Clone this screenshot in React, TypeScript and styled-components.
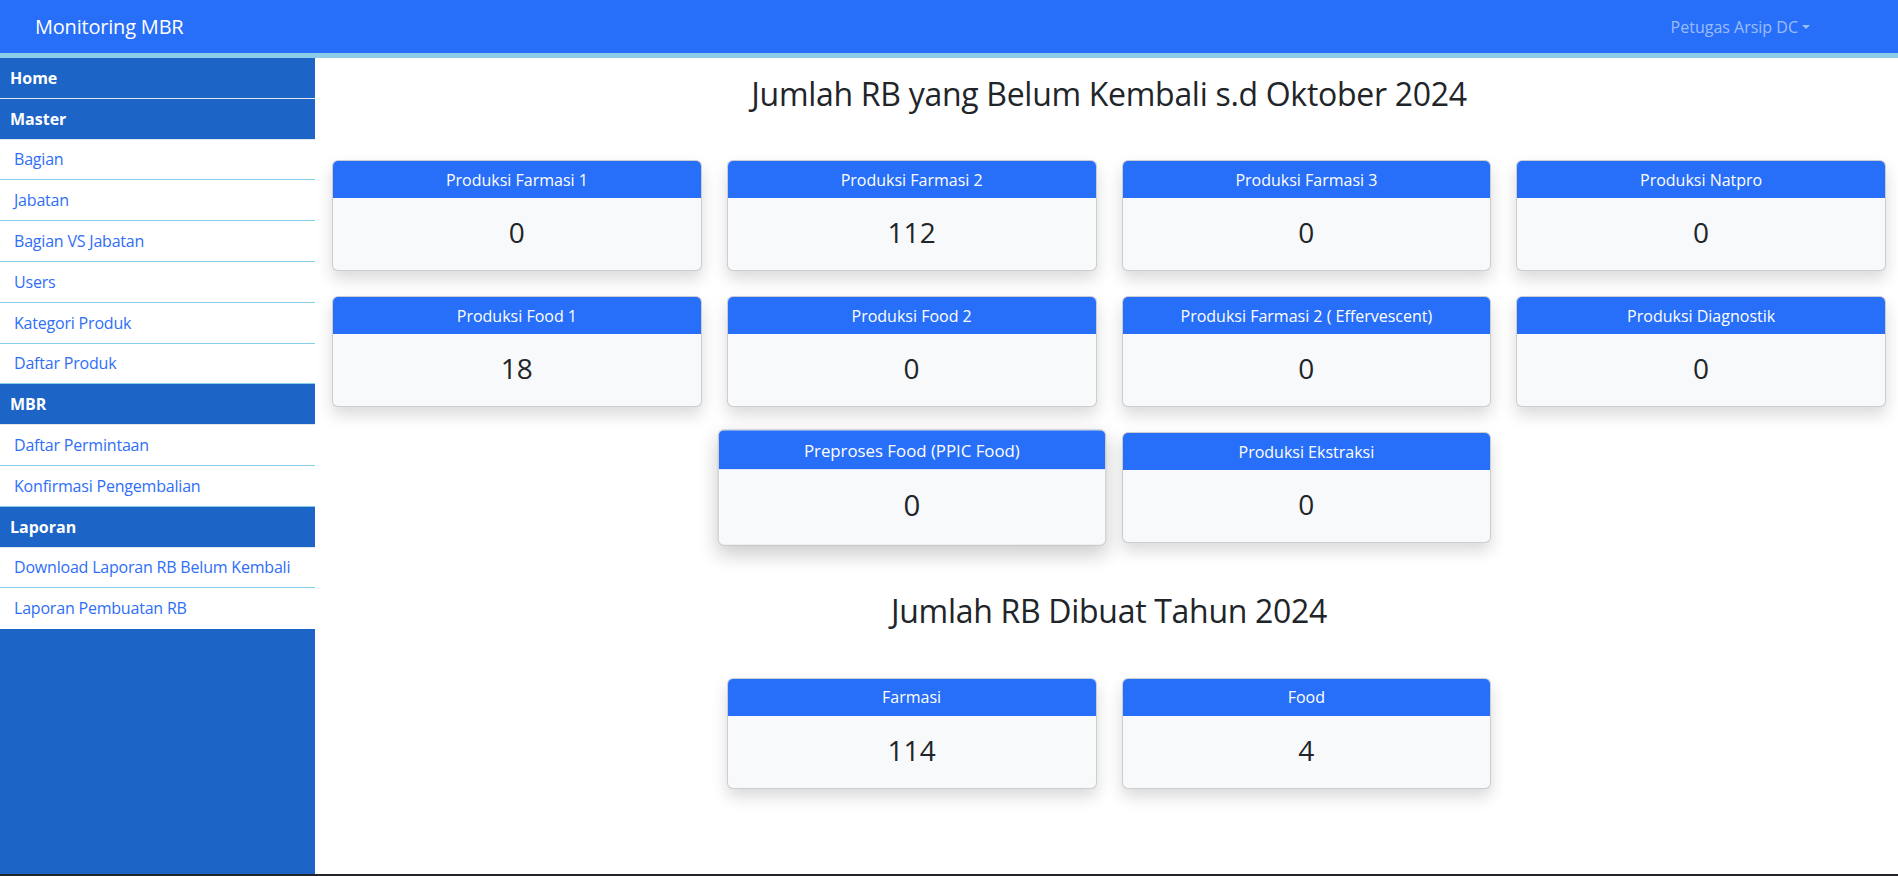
import React from "react";
import styled, { createGlobalStyle } from "styled-components";

const FONT = `"Open Sans", "Noto Sans", "Liberation Sans", sans-serif`;

const Global = createGlobalStyle`
  html, body { margin: 0; padding: 0; }
  body { font-family: ${FONT}; color: #212529; background: #fff; }
  * { box-sizing: border-box; }
`;

const Page = styled.div`
  height: 876px;
  display: flex;
  flex-direction: column;
  border-bottom: 2px solid #212529;
`;

const Navbar = styled.header`
  height: 58px;
  flex-shrink: 0;
  background: #276ef9;
  border-bottom: 5px solid #8bcde8;
  display: flex;
  align-items: center;
  justify-content: space-between;
  padding: 0 88px 0 35px;
`;

const Brand = styled.div`
  color: #fff;
  font-size: 20px;
  line-height: 1;
  letter-spacing: -0.2px;
`;

const UserMenu = styled.div`
  color: rgba(255, 255, 255, 0.55);
  font-size: 16px;
  display: flex;
  align-items: center;
  gap: 4px;
`;

const Caret = styled.span`
  display: inline-block;
  width: 0;
  height: 0;
  border-left: 4px solid transparent;
  border-right: 4px solid transparent;
  border-top: 4px solid rgba(255, 255, 255, 0.55);
`;

const Body = styled.div`
  flex: 1;
  display: flex;
  min-height: 0;
`;

const Sidebar = styled.nav`
  width: 315px;
  flex-shrink: 0;
  background: #1c64c6;
  display: flex;
  flex-direction: column;
`;

const SectionHead = styled.div`
  height: 40.8px;
  display: flex;
  align-items: center;
  padding-left: 10px;
  color: #fff;
  font-weight: 700;
  font-size: 16px;
  border-bottom: 1px solid #e2e6ea;
`;

const Link = styled.a<{ $last?: boolean }>`
  height: 40.8px;
  display: flex;
  align-items: center;
  padding-left: 14px;
  background: #fff;
  color: #2f6ef7;
  font-size: 16px;
  letter-spacing: -0.2px;
  text-decoration: none;
  border-bottom: 1px solid ${(p) => (p.$last ? "#fff" : "#87cdea")};
`;

const Main = styled.main`
  flex: 1;
  padding: 0 12px 0 17px;
  display: flex;
  flex-direction: column;
`;

const Title = styled.h2<{ $top: number; $bottom: number }>`
  margin: ${(p) => p.$top}px 0 ${(p) => p.$bottom}px;
  text-align: center;
  font-weight: 400;
  font-size: 32px;
  line-height: 1.2;
  letter-spacing: -0.3px;
`;

const Grid = styled.div`
  display: grid;
  grid-template-columns: repeat(4, 1fr);
  column-gap: 25px;
  row-gap: 25px;
`;

const CenterRow = styled.div<{ $top: number }>`
  display: flex;
  justify-content: center;
  gap: 25px;
  margin-top: ${(p) => p.$top}px;
`;

const Card = styled.div<{ $hover?: boolean; $fixed?: boolean }>`
  border: 1px solid rgba(0, 0, 0, 0.175);
  border-radius: 6px;
  overflow: hidden;
  background: #f8f9fa;
  height: 111px;
  display: flex;
  flex-direction: column;
  box-shadow: ${(p) =>
    p.$hover ? "0 8px 18px rgba(0,0,0,0.2)" : "0 8px 16px rgba(0,0,0,0.15)"};
  transform: ${(p) => (p.$hover ? "scale(1.05)" : "none")};
  width: ${(p) => (p.$fixed ? "369.75px" : "auto")};
`;

const CardHeader = styled.div`
  height: 37px;
  flex-shrink: 0;
  background: #276ef9;
  color: #fff;
  font-size: 16px;
  display: flex;
  align-items: center;
  justify-content: center;
`;

const CardBody = styled.div`
  flex: 1;
  display: flex;
  align-items: center;
  justify-content: center;
  font-size: 28px;
  padding-bottom: 4px;
`;

type Stat = { label: string; value: number; hover?: boolean };

const StatCard = ({ s, fixed }: { s: Stat; fixed?: boolean }) => (
  <Card $hover={s.hover} $fixed={fixed}>
    <CardHeader>{s.label}</CardHeader>
    <CardBody>{s.value}</CardBody>
  </Card>
);

const grid: Stat[] = [
  { label: "Produksi Farmasi 1", value: 0 },
  { label: "Produksi Farmasi 2", value: 112 },
  { label: "Produksi Farmasi 3", value: 0 },
  { label: "Produksi Natpro", value: 0 },
  { label: "Produksi Food 1", value: 18 },
  { label: "Produksi Food 2", value: 0 },
  { label: "Produksi Farmasi 2 ( Effervescent)", value: 0 },
  { label: "Produksi Diagnostik", value: 0 },
];

const extra: Stat[] = [
  { label: "Preproses Food (PPIC Food)", value: 0, hover: true },
  { label: "Produksi Ekstraksi", value: 0 },
];

const yearly: Stat[] = [
  { label: "Farmasi", value: 114 },
  { label: "Food", value: 4 },
];

const menu: { head: string; links: string[] }[] = [
  { head: "Home", links: [] },
  {
    head: "Master",
    links: ["Bagian", "Jabatan", "Bagian VS Jabatan", "Users", "Kategori Produk", "Daftar Produk"],
  },
  { head: "MBR", links: ["Daftar Permintaan", "Konfirmasi Pengembalian"] },
  { head: "Laporan", links: ["Download Laporan RB Belum Kembali", "Laporan Pembuatan RB"] },
];

export default function App() {
  return (
    <>
      <Global />
      <Page>
        <Navbar>
          <Brand>Monitoring MBR</Brand>
          <UserMenu>
            Petugas Arsip DC <Caret />
          </UserMenu>
        </Navbar>
        <Body>
          <Sidebar>
            {menu.map((m, i) => (
              <React.Fragment key={m.head}>
                <SectionHead>{m.head}</SectionHead>
                {m.links.map((l, j) => (
                  <Link
                    key={l}
                    href="#"
                    $last={i === menu.length - 1 && j === m.links.length - 1}
                  >
                    {l}
                  </Link>
                ))}
              </React.Fragment>
            ))}
          </Sidebar>
          <Main>
            <Title $top={17} $bottom={47}>
              Jumlah RB yang Belum Kembali s.d Oktober 2024
            </Title>
            <Grid>
              {grid.map((s) => (
                <StatCard key={s.label} s={s} />
              ))}
            </Grid>
            <CenterRow $top={25}>
              {extra.map((s) => (
                <StatCard key={s.label} s={s} fixed />
              ))}
            </CenterRow>
            <Title $top={49} $bottom={47}>
              Jumlah RB Dibuat Tahun 2024
            </Title>
            <CenterRow $top={0}>
              {yearly.map((s) => (
                <StatCard key={s.label} s={s} fixed />
              ))}
            </CenterRow>
          </Main>
        </Body>
      </Page>
    </>
  );
}
